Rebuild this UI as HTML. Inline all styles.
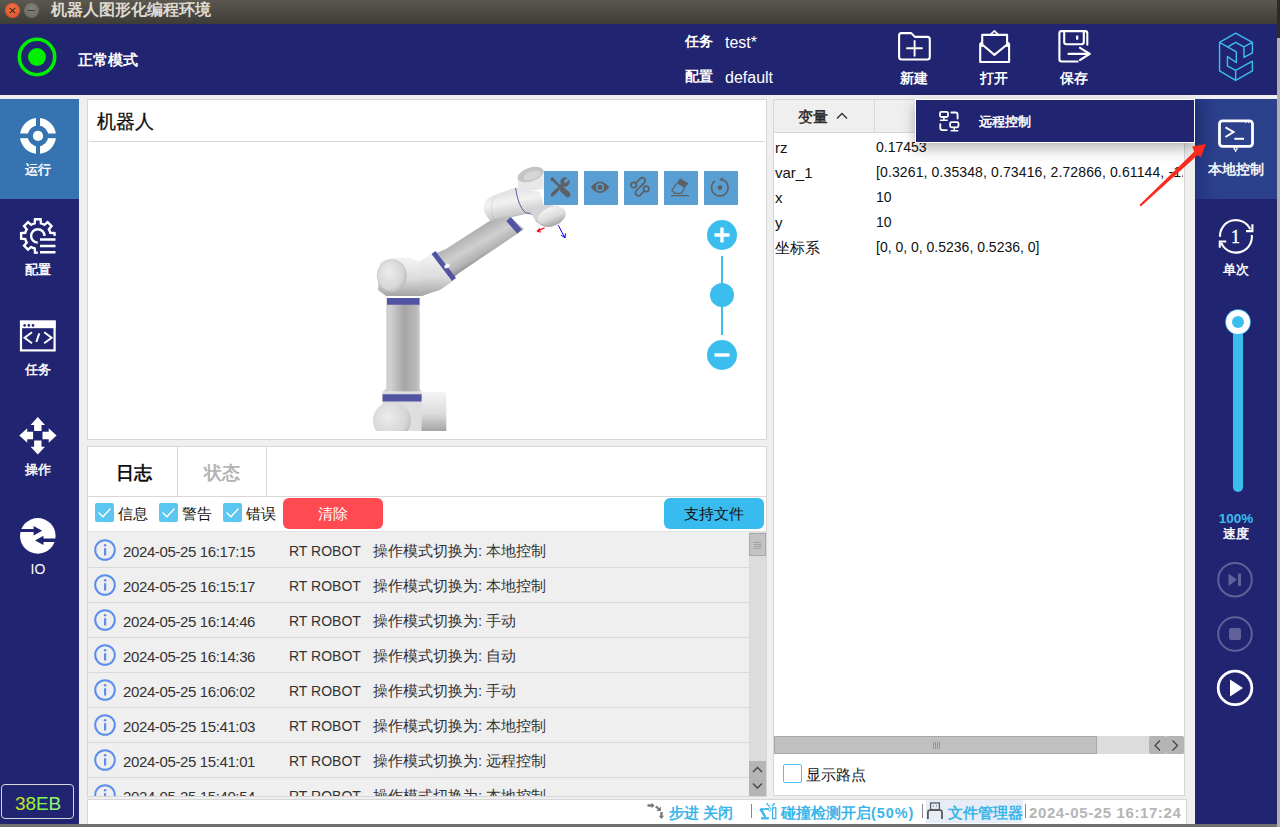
<!DOCTYPE html>
<html><head><meta charset="utf-8">
<style>
*{box-sizing:border-box;margin:0;padding:0}
html,body{width:1280px;height:827px;overflow:hidden;background:#efefef;font-family:"Liberation Sans",sans-serif;position:relative}
.a{position:absolute}
.nw{white-space:nowrap}
#title{left:0;top:0;width:1277px;height:24px;background:linear-gradient(#5a5850,#3d3c37)}
#hdr{left:0;top:24px;width:1277px;height:71px;background:#212470}
#lsb{left:0;top:99px;width:79px;height:725px;background:#212470}
#rsb{left:1195px;top:99px;width:82px;height:725px;background:#212470}
#rstrip{left:1277px;top:38px;width:3px;height:789px;background:#b0b0b0}
#rstrip2{left:1277px;top:0;width:3px;height:38px;background:#2c2b28}
#bstrip{left:0;top:824px;width:1277px;height:3px;background:#707070}
.panel{background:#fff;border:1px solid #d6d6d6}
.wt{color:#fff}
.lbl{color:#fff;font-size:13px;font-weight:normal;-webkit-text-stroke:0.45px #fff;text-align:center;width:76px;left:0}
.hl{color:#fff;font-size:13px;font-weight:bold}
.tb{width:34px;height:34px;background:#5a9fd4;top:171px}
.tb svg{position:absolute;left:0;top:0}
.row{left:88px;width:661px;height:35px;background:#efefef;border-bottom:1px solid #d9d9d9}
.row .ic{position:absolute;left:6px;top:6px}
.row .d{position:absolute;left:35px;top:10px;font-size:15px;letter-spacing:-0.38px;color:#333}
.row .r{position:absolute;left:201px;top:10px;font-size:14px;color:#333}
.row .m{position:absolute;left:285px;top:9px;font-size:15px;color:#333}
.vr{left:775px;font-size:15px;color:#111}
.vv{left:876px;font-size:14px;color:#111}
.cb{width:19px;height:19px;background:#5bc6f0;border-radius:2px;top:503px}
.st{color:#3ab5ea;font-size:14.5px;font-weight:bold;top:803.5px}
</style></head><body>
<div id="title" class="a"></div>
<div id="rstrip2" class="a"></div>
<div id="rstrip" class="a"></div>
<div id="bstrip" class="a"></div>
<!-- title bar buttons -->
<div class="a" style="left:5px;top:3px;width:15px;height:15px;border-radius:50%;background:radial-gradient(circle at 50% 40%,#f47a4a,#d9461e)"></div>
<svg class="a" style="left:5px;top:3px" width="15" height="15"><path d="M4.8 4.8L10.2 10.2M10.2 4.8L4.8 10.2" stroke="#3a2418" stroke-width="1.1"/></svg>
<div class="a" style="left:24px;top:3px;width:15px;height:15px;border-radius:50%;background:radial-gradient(circle at 50% 40%,#848279,#66645d)"></div>
<div class="a" style="left:28px;top:10px;width:7px;height:1px;background:#3b3a36"></div>
<div class="a nw" style="left:51px;top:0px;font-size:16px;font-weight:bold;color:#dedad0;line-height:20px">机器人图形化编程环境</div>

<div id="hdr" class="a"></div>
<div id="lsb" class="a"></div>
<div id="rsb" class="a"></div>

<!-- header -->
<svg class="a" style="left:17px;top:37px" width="40" height="40"><circle cx="20" cy="20" r="17.7" fill="none" stroke="#00ee00" stroke-width="3.6"/><circle cx="20" cy="20" r="9" fill="#00ee00"/></svg>
<div class="a nw hl" style="left:78px;top:51px;font-size:14.5px">正常模式</div>
<div class="a nw hl" style="left:685px;top:33px;font-size:14px">任务</div>
<div class="a nw wt" style="left:725px;top:34px;font-size:16px">test*</div>
<div class="a nw hl" style="left:685px;top:68px;font-size:14px">配置</div>
<div class="a nw wt" style="left:725px;top:69px;font-size:16px">default</div>
<svg class="a" style="left:890px;top:24px" width="210" height="70" viewBox="890 24 210 70" fill="none" stroke="#fff" stroke-width="2.1" stroke-linejoin="round" stroke-linecap="round">
 <path d="M901.6 33.1H911.3L914.9 36.9H927.3Q929.8 36.9 929.8 39.4V57Q929.8 59.5 927.3 59.5H901.6Q899.1 59.5 899.1 57V35.6Q899.1 33.1 901.6 33.1Z"/>
 <path d="M914.6 41V55.7M907 48.3H922" stroke-width="1.9"/>
 <path d="M980.2 44V62H1009.1V44L1007.1 42M980.2 44L982.2 42M982.2 44.5L994.4 54.9L1007.1 44.5M982.2 46V34.9H1007.1V46" />
 <path d="M990.5 34.5L994.4 30.8L998.3 34.5" stroke-width="1.6"/>
 <path d="M1077.7 61.5H1061.6Q1059.4 61.5 1059.4 59.3V33.3Q1059.4 31.1 1061.6 31.1H1085.1Q1087.3 31.1 1087.3 33.3V44.8M1064.2 31.5V42.1Q1064.2 44.3 1066.4 44.3H1081.6Q1083.8 44.3 1083.8 42.1V31.5"/>
 <path d="M1077.2 35.6V39.7" stroke-width="2.2" stroke-linecap="butt"/>
 <path d="M1068.5 53.9H1089.5M1080 47.8L1089.8 53.9L1080 60"/>
</svg>
<div class="a nw hl" style="left:900px;top:70px;font-size:13.5px">新建</div>
<div class="a nw hl" style="left:980px;top:70px;font-size:13.5px">打开</div>
<div class="a nw hl" style="left:1060px;top:70px;font-size:13.5px">保存</div>
<svg class="a" style="left:1205px;top:24px" width="70" height="70" viewBox="0 0 827 827" fill="none" stroke="#3bbdee" stroke-width="17" stroke-linejoin="round">
 <path d="M172 218L362 108L560 218L560 340L460 395L460 270L560 218"/>
 <path d="M172 218L370 330L370 455L265 385L265 495L362 548L560 440L560 555L362 665L172 555Z"/>
 <path d="M270 270L362 218L460 270M362 548V665"/>
</svg>

<!-- left sidebar -->
<div class="a" style="left:0;top:99px;width:79px;height:100px;background:#3574b1"></div>
<svg class="a" style="left:0;top:99px" width="79" height="500">
 <g transform="translate(38,36.9)">
  <path fill="#fff" fill-rule="evenodd" d="M-18 0A18 18 0 1 0 18 0A18 18 0 1 0 -18 0ZM-10.3 0A10.3 10.3 0 1 1 10.3 0A10.3 10.3 0 1 1 -10.3 0Z"/>
  <rect x="-2" y="-19" width="4" height="38" fill="#3574b1"/>
  <rect x="-19" y="-2.4" width="38" height="4.7" fill="#3574b1"/>
  <circle r="5.1" fill="#fff"/>
 </g>
</svg>
<div class="a nw lbl" style="top:161px">运行</div>
<svg class="a" style="left:0;top:199px" width="79" height="100" viewBox="0 199 79 100" fill="none" stroke="#fff" stroke-width="2.4">
 <path d="M54.70 235.90L54.47 233.11L50.32 232.78A12.9 12.9 0 0 0 48.86 229.26L51.56 226.09L47.61 222.14L44.44 224.84A12.9 12.9 0 0 0 40.92 223.38L40.59 219.23L35.01 219.23L34.68 223.38A12.9 12.9 0 0 0 31.16 224.84L27.99 222.14L24.04 226.09L26.74 229.26A12.9 12.9 0 0 0 25.28 232.78L21.13 233.11L21.13 238.69L25.28 239.02A12.9 12.9 0 0 0 26.74 242.54L24.04 245.71L27.99 249.66L31.16 246.96A12.9 12.9 0 0 0 34.68 248.42L35.01 252.57L37.80 252.80" stroke-linejoin="miter"/>
 <path d="M37.8 242.6A6.7 6.7 0 1 1 44.5 235.9"/>
 <path d="M40 239.5H55.5M40 245.9H55.5M40 252.3H55.5" stroke-width="2.5"/>
</svg>
<div class="a nw lbl" style="top:261px">配置</div>
<svg class="a" style="left:0;top:300px" width="79" height="100">
 <rect x="21" y="21.6" width="33.6" height="28.8" fill="none" stroke="#fff" stroke-width="2.2"/>
 <rect x="20" y="20.6" width="35.6" height="7.6" fill="#fff"/>
 <circle cx="24.6" cy="25.4" r="1.3" fill="#212470"/><circle cx="28.8" cy="25.4" r="1.3" fill="#212470"/><circle cx="33" cy="25.4" r="1.3" fill="#212470"/>
 <path d="M32 32.2L24.6 37.7L32 43.2M44.2 32.2L51.6 37.7L44.2 43.2M39.3 33.4L36.3 42" fill="none" stroke="#fff" stroke-width="2"/>
</svg>
<div class="a nw lbl" style="top:361px">任务</div>
<svg class="a" style="left:0;top:399px" width="79" height="100">
 <path fill="#fff" d="M37.8 18.1L45 26H41.5V32.1H34.1V26H30.6Z M37.8 55.6L45 47.7H41.5V41.6H34.1V47.7H30.6Z M19.3 36.5L27.2 29.3V32.8H33.1V40.2H27.2V43.7Z M56.6 36.5L48.7 29.3V32.8H42.5V40.2H48.7V43.7Z"/>
</svg>
<div class="a nw lbl" style="top:461px">操作</div>
<svg class="a" style="left:0;top:499px" width="79" height="100">
 <circle cx="37.8" cy="36.9" r="17.8" fill="#fff"/>
 <path fill="#212470" d="M19 29.9H33.6V27L42.2 31.7L33.6 36.4V33H19Z M57 39.5H43.5V36.8L35 41.4L43.5 46.1V43H57Z"/>
</svg>
<div class="a nw lbl" style="top:561px;font-weight:normal;font-size:14px;-webkit-text-stroke:0">IO</div>
<div class="a" style="left:1px;top:784px;width:73px;height:35px;border:1.5px solid #d8d8d8;border-radius:4px"></div>
<div class="a nw" style="left:15px;top:793px;font-size:19px;letter-spacing:-0.1px"><span style="color:#c9e31c">3</span><span style="color:#9cf32a">8</span><span style="color:#7ef552">E</span><span style="color:#93f473">B</span></div>

<!-- robot panel -->
<div class="a panel" style="left:87px;top:99px;width:680px;height:341px"></div>
<div class="a nw" style="left:97px;top:109px;font-size:18.5px;color:#111;-webkit-text-stroke:0.3px #111">机器人</div>
<div class="a" style="left:89px;top:141px;width:676px;height:1px;background:#d8d8d8"></div>

<!-- robot -->
<svg class="a" style="left:360px;top:155px" width="215" height="276" viewBox="360 155 215 276">
 <defs>
  <linearGradient id="gv" x1="382" x2="422" y1="0" y2="0" gradientUnits="userSpaceOnUse"><stop offset="0" stop-color="#c4c4c4"/><stop offset="0.2" stop-color="#d2d2d2"/><stop offset="0.55" stop-color="#a6a6a6"/><stop offset="0.85" stop-color="#b8b8b8"/><stop offset="1" stop-color="#d8d8d8"/></linearGradient>
  <linearGradient id="gf" x1="451" y1="244" x2="466" y2="270" gradientUnits="userSpaceOnUse"><stop offset="0" stop-color="#b0b0b0"/><stop offset="0.45" stop-color="#cfcfcf"/><stop offset="0.8" stop-color="#b4b4b4"/><stop offset="1" stop-color="#8c8c8c"/></linearGradient>
  <linearGradient id="gj" x1="0" x2="0" y1="0" y2="1"><stop offset="0" stop-color="#f4f4f4"/><stop offset="0.55" stop-color="#dcdcdc"/><stop offset="1" stop-color="#a4a4a4"/></linearGradient>
  <linearGradient id="gw" x1="490" y1="192" x2="496" y2="224" gradientUnits="userSpaceOnUse"><stop offset="0" stop-color="#dedede"/><stop offset="0.4" stop-color="#f2f2f2"/><stop offset="0.8" stop-color="#cdcdcd"/><stop offset="1" stop-color="#9a9a9a"/></linearGradient>
  <radialGradient id="gc" cx="0.4" cy="0.4" r="0.7"><stop offset="0" stop-color="#ececec"/><stop offset="0.7" stop-color="#d6d6d6"/><stop offset="1" stop-color="#b4b4b4"/></radialGradient>
 </defs>
 <!-- base -->
 <path d="M421 392.3H443Q446.3 392.3 446.3 396V431H421Z" fill="url(#gj)"/>
 <path d="M382.5 391.6H421.6V431H382.5Z" fill="#dedede"/>
 <circle cx="391.9" cy="420.6" r="19" fill="url(#gc)"/>
 <path d="M382.5 394.2H421.6V401.4H382.5Z" fill="#5054a2"/>
 <!-- lower arm -->
 <path d="M386.3 298H419.8V388.7L421.6 391.6H382.8L386.3 388.7Z" fill="url(#gv)"/>
 <path d="M387 298H419.5V304.8H387Z" fill="#5054a2"/>
 <!-- forearm tube -->
 <path d="M420 262L432 255L445.9 249L488.3 221.8L505 212L524 229L522.1 230.5L459 272.9L447 283L436 290L422 296Z" fill="url(#gf)"/>
 <path d="M418 263L431 254L438 254L446 266L453 281L440 290L421 296Z" fill="url(#gj)"/>
 <path d="M433.5 252.5L454 279.5" stroke="#5054a2" stroke-width="5"/>
 <path d="M508.5 219L519.5 231.5" stroke="#5054a2" stroke-width="6"/>
 <ellipse cx="447" cy="266" rx="3" ry="2" fill="#f8f8f8" transform="rotate(-30 447 266)"/>
 <!-- shoulder joint -->
 <path d="M380 262Q390 256 410 258L420 262L421 296H386L378 290Z" fill="url(#gj)"/>
 <ellipse cx="391.8" cy="275.7" rx="14.5" ry="16.2" fill="url(#gc)" stroke="#b8b8b8" stroke-width="0.6"/>
 <!-- wrist1 -->
 <path d="M492.4 195.8L515.6 187.6L540 192L544 206L533 212.2L491.4 221.9Q483.7 214 483.7 208Q484 199 492.4 195.8Z" fill="url(#gw)"/>
 <path d="M515.6 188Q518 206 525.3 212.7Q534 216 542.7 214.2L558.2 206.4" fill="none" stroke="#4a4f98" stroke-width="0.9"/>
 <path d="M495 197Q488 208 496 221" fill="none" stroke="#888" stroke-width="0.5" stroke-dasharray="1 1.5"/>
 <!-- wrist2 top cap -->
 <path d="M517.6 179.3L543.7 169.7V189L518.5 192Z" fill="#e8e8e8"/>
 <ellipse cx="530.6" cy="174.5" rx="13.5" ry="6.8" transform="rotate(-18 530.6 174.5)" fill="#c4c4c4"/>
 <ellipse cx="532" cy="175.5" rx="9" ry="4" transform="rotate(-18 532 175.5)" fill="#d6d6d6"/>
 <!-- flange -->
 <path d="M530 211L546 204L560 207L552 226L536 222Z" fill="#d4d4d4"/>
 <ellipse cx="551.9" cy="216.5" rx="14.5" ry="9.5" transform="rotate(-22 551.9 216.5)" fill="url(#gj)"/>
 <path d="M536 221Q545 228 552 226" fill="none" stroke="#999" stroke-width="0.6"/>
 <path d="M544.6 227.7L537 231.5M537 231.5L540 228.5M537 231.5L541 232" stroke="#f00" stroke-width="1.2" fill="none"/>
 <path d="M558.2 225.2L565 237.9M565 237.9L561 235M565 237.9L565.5 233.5" stroke="#00f" stroke-width="1" fill="none"/>
</svg>
<div class="a tb" style="left:544px"><svg width="34" height="34"><g stroke="#5d6166" stroke-linecap="round"><path d="M8.4 8.2L16.8 16.6" stroke-width="2.6"/><path d="M19 19L23.6 23.6" stroke-width="5.6"/><path d="M8.3 23.8L13.6 18.5" stroke-width="3.4"/><path d="M15.6 16.8L19.6 12.8" stroke-width="3.4"/></g><circle cx="8.4" cy="8.2" r="1.9" fill="#5d6166"/><circle cx="21" cy="11" r="4.7" fill="#5d6166"/><path d="M21.4 10.6L25.6 6.4" stroke="#5a9fd4" stroke-width="2.8" stroke-linecap="round"/></svg></div>
<div class="a tb" style="left:584px"><svg width="34" height="34"><path d="M6.8 16.2Q16 4.6 25.3 16.2Q16 27.8 6.8 16.2Z" fill="#5d6166"/><circle cx="16" cy="16.2" r="3.25" fill="none" stroke="#5a9fd4" stroke-width="1.5"/></svg></div>
<div class="a tb" style="left:624px"><svg width="34" height="34" fill="none" stroke="#5d6166" stroke-width="1.7"><circle cx="9.7" cy="14" r="2.7"/><circle cx="22.2" cy="17.9" r="2.7"/><path d="M11.6 12.1L16.2 7.6A2.9 2.9 0 0 1 20.3 11.7L12 20A3 3 0 0 0 16.2 24.2L20.3 19.9"/></svg></div>
<div class="a tb" style="left:664px"><svg width="34" height="34"><path d="M16 7.2L24.5 12.3L20.6 16.9L12.8 12.3Z" fill="#5d6166"/><path d="M12.8 12.3L7.8 19.5L10.8 22.3H17.4L20.6 16.9" fill="none" stroke="#5d6166" stroke-width="1.3"/><path d="M7 24.6H25.1" stroke="#5d6166" stroke-width="1.3"/></svg></div>
<div class="a tb" style="left:704px"><svg width="34" height="34"><path d="M10.9 9.9A8.3 8.3 0 1 0 18 8.6" fill="none" stroke="#5d6166" stroke-width="1.6"/><path d="M15.3 8.4L18.9 5.9L18.4 10.7Z" fill="#5d6166"/><circle cx="16" cy="16.7" r="2.4" fill="#5d6166"/></svg></div>
<svg class="a" style="left:700px;top:215px" width="44" height="160">
 <circle cx="22" cy="20" r="15" fill="#3bbdee"/><path d="M14.5 20H29.5M22 12.5V27.5" stroke="#fff" stroke-width="3.4"/>
 <rect x="21" y="41" width="2" height="79" fill="#3bbdee"/>
 <circle cx="22" cy="80" r="12" fill="#3bbdee"/>
 <circle cx="22" cy="140" r="15" fill="#3bbdee"/><path d="M14.5 140H29.5" stroke="#fff" stroke-width="3.4"/>
</svg>
<!-- log panel -->
<div class="a panel" style="left:87px;top:446px;width:680px;height:351px"></div>
<div class="a" style="left:88px;top:496px;width:678px;height:1px;background:#d8d8d8"></div>
<div class="a" style="left:177px;top:447px;width:1px;height:49px;background:#d8d8d8"></div>
<div class="a" style="left:266px;top:447px;width:1px;height:49px;background:#d8d8d8"></div>
<div class="a nw" style="left:116px;top:461px;font-size:18px;font-weight:bold;color:#111">日志</div>
<div class="a nw" style="left:204px;top:461px;font-size:18px;font-weight:bold;color:#b4b4b4">状态</div>
<div class="a" style="left:88px;top:531px;width:678px;height:1px;background:#e2e2e2"></div>
<div class="a cb" style="left:95px"><svg width="19" height="19"><path d="M3.5 9.5L8 13.8L15.5 5.5" fill="none" stroke="#fff" stroke-width="1.3"/></svg></div>
<div class="a nw" style="left:118px;top:505px;font-size:15px;color:#111">信息</div>
<div class="a cb" style="left:159px"><svg width="19" height="19"><path d="M3.5 9.5L8 13.8L15.5 5.5" fill="none" stroke="#fff" stroke-width="1.3"/></svg></div>
<div class="a nw" style="left:182px;top:505px;font-size:15px;color:#111">警告</div>
<div class="a cb" style="left:223px"><svg width="19" height="19"><path d="M3.5 9.5L8 13.8L15.5 5.5" fill="none" stroke="#fff" stroke-width="1.3"/></svg></div>
<div class="a nw" style="left:246px;top:505px;font-size:15px;color:#111">错误</div>
<div class="a" style="left:283px;top:498px;width:100px;height:31px;border-radius:6px;background:#fe4a50"></div>
<div class="a nw" style="left:318px;top:505px;font-size:15px;color:#fff">清除</div>
<div class="a" style="left:664px;top:498px;width:100px;height:31px;border-radius:6px;background:#38bbee"></div>
<div class="a nw" style="left:684px;top:505px;font-size:15px;color:#111">支持文件</div>
<div class="a" style="left:88px;top:532px;width:678px;height:264px;overflow:hidden;background:#efefef" id="loglist"><div class="a row" style="left:0;top:1px"><svg class="ic" width="22" height="22"><circle cx="11" cy="11" r="9.8" fill="none" stroke="#5b8fef" stroke-width="2"/><rect x="10" y="9.2" width="2.2" height="7.3" fill="#5b8fef"/><circle cx="11.1" cy="6.3" r="1.3" fill="#5b8fef"/></svg><span class="d nw">2024-05-25 16:17:15</span><span class="r nw">RT ROBOT</span><span class="m nw">操作模式切换为: 本地控制</span></div><div class="a row" style="left:0;top:36px"><svg class="ic" width="22" height="22"><circle cx="11" cy="11" r="9.8" fill="none" stroke="#5b8fef" stroke-width="2"/><rect x="10" y="9.2" width="2.2" height="7.3" fill="#5b8fef"/><circle cx="11.1" cy="6.3" r="1.3" fill="#5b8fef"/></svg><span class="d nw">2024-05-25 16:15:17</span><span class="r nw">RT ROBOT</span><span class="m nw">操作模式切换为: 本地控制</span></div><div class="a row" style="left:0;top:71px"><svg class="ic" width="22" height="22"><circle cx="11" cy="11" r="9.8" fill="none" stroke="#5b8fef" stroke-width="2"/><rect x="10" y="9.2" width="2.2" height="7.3" fill="#5b8fef"/><circle cx="11.1" cy="6.3" r="1.3" fill="#5b8fef"/></svg><span class="d nw">2024-05-25 16:14:46</span><span class="r nw">RT ROBOT</span><span class="m nw">操作模式切换为: 手动</span></div><div class="a row" style="left:0;top:106px"><svg class="ic" width="22" height="22"><circle cx="11" cy="11" r="9.8" fill="none" stroke="#5b8fef" stroke-width="2"/><rect x="10" y="9.2" width="2.2" height="7.3" fill="#5b8fef"/><circle cx="11.1" cy="6.3" r="1.3" fill="#5b8fef"/></svg><span class="d nw">2024-05-25 16:14:36</span><span class="r nw">RT ROBOT</span><span class="m nw">操作模式切换为: 自动</span></div><div class="a row" style="left:0;top:141px"><svg class="ic" width="22" height="22"><circle cx="11" cy="11" r="9.8" fill="none" stroke="#5b8fef" stroke-width="2"/><rect x="10" y="9.2" width="2.2" height="7.3" fill="#5b8fef"/><circle cx="11.1" cy="6.3" r="1.3" fill="#5b8fef"/></svg><span class="d nw">2024-05-25 16:06:02</span><span class="r nw">RT ROBOT</span><span class="m nw">操作模式切换为: 手动</span></div><div class="a row" style="left:0;top:176px"><svg class="ic" width="22" height="22"><circle cx="11" cy="11" r="9.8" fill="none" stroke="#5b8fef" stroke-width="2"/><rect x="10" y="9.2" width="2.2" height="7.3" fill="#5b8fef"/><circle cx="11.1" cy="6.3" r="1.3" fill="#5b8fef"/></svg><span class="d nw">2024-05-25 15:41:03</span><span class="r nw">RT ROBOT</span><span class="m nw">操作模式切换为: 本地控制</span></div><div class="a row" style="left:0;top:211px"><svg class="ic" width="22" height="22"><circle cx="11" cy="11" r="9.8" fill="none" stroke="#5b8fef" stroke-width="2"/><rect x="10" y="9.2" width="2.2" height="7.3" fill="#5b8fef"/><circle cx="11.1" cy="6.3" r="1.3" fill="#5b8fef"/></svg><span class="d nw">2024-05-25 15:41:01</span><span class="r nw">RT ROBOT</span><span class="m nw">操作模式切换为: 远程控制</span></div><div class="a row" style="left:0;top:246px"><svg class="ic" width="22" height="22"><circle cx="11" cy="11" r="9.8" fill="none" stroke="#5b8fef" stroke-width="2"/><rect x="10" y="9.2" width="2.2" height="7.3" fill="#5b8fef"/><circle cx="11.1" cy="6.3" r="1.3" fill="#5b8fef"/></svg><span class="d nw">2024-05-25 15:40:54</span><span class="r nw">RT ROBOT</span><span class="m nw">操作模式切换为: 本地控制</span></div><div class="a" style="left:661px;top:0;width:17px;height:264px;background:#dcdcdc"></div><div class="a" style="left:661px;top:1px;width:17px;height:23px;background:#c3c3c3;border:1px solid #a9a9a9"></div><svg class="a" style="left:661px;top:1px" width="17" height="23"><path d="M4.5 9.5H12.5M4.5 11.5H12.5M4.5 13.5H12.5M4.5 15.5H12.5" stroke="#999" stroke-width="0.8"/></svg><div class="a" style="left:661px;top:229px;width:17px;height:35px;background:#b5b5b5"></div><svg class="a" style="left:661px;top:229px" width="17" height="35" fill="none" stroke="#444" stroke-width="1.3"><path d="M4 11L8.5 6.5L13 11M4 22.5L8.5 27L13 22.5"/></svg></div>

<!-- variables panel -->
<div class="a panel" style="left:773px;top:99px;width:412px;height:697px"></div>
<div class="a" style="left:774px;top:100px;width:410px;height:33px;background:#efefef;border-bottom:1px solid #d8d8d8"></div>
<div class="a" style="left:874px;top:100px;width:1px;height:33px;background:#d8d8d8"></div>
<div class="a nw" style="left:798px;top:108px;font-size:15px;color:#222;-webkit-text-stroke:0.4px #222">变量</div>
<svg class="a" style="left:835px;top:111px" width="14" height="10"><path d="M2 7.5L7 2.5L12 7.5" fill="none" stroke="#333" stroke-width="1.4"/></svg>
<div class="a nw vr" style="top:139px">rz</div><div class="a nw vv" style="top:139px">0.17453</div>
<div class="a nw vr" style="top:164px">var_1</div><div class="a nw vv" style="top:164px;width:307px;overflow:hidden;letter-spacing:0.12px">[0.3261, 0.35348, 0.73416, 2.72866, 0.61144, -1.</div>
<div class="a nw vr" style="top:189px">x</div><div class="a nw vv" style="top:189px">10</div>
<div class="a nw vr" style="top:214px">y</div><div class="a nw vv" style="top:214px">10</div>
<div class="a nw vr" style="top:239px">坐标系</div><div class="a nw vv" style="top:239px">[0, 0, 0, 0.5236, 0.5236, 0]</div>
<div class="a" style="left:774px;top:736px;width:410px;height:18px;background:#dcdcdc"></div>
<div class="a" style="left:774px;top:736px;width:323px;height:18px;background:#c0c0c0;border:1px solid #a8a8a8"></div>
<svg class="a" style="left:930px;top:736.5px" width="12" height="17"><path d="M3.5 5V12M5.5 5V12M7.5 5V12M9.5 5V12" stroke="#888" stroke-width="0.8"/></svg>
<div class="a" style="left:1149px;top:736px;width:17px;height:18px;background:#b4b4b4;border-radius:2px"></div>
<div class="a" style="left:1166px;top:736px;width:18px;height:18px;background:#b4b4b4;border-radius:2px"></div>
<svg class="a" style="left:1149px;top:736.5px" width="35" height="17" fill="none" stroke="#444" stroke-width="1.3"><path d="M11 3.5L6 8.5L11 13.5M23.5 3.5L28.5 8.5L23.5 13.5"/></svg>
<div class="a" style="left:783px;top:764px;width:19px;height:19px;border:1.3px solid #4cc3f2;border-radius:2px;background:#fff"></div>
<div class="a nw" style="left:806px;top:766px;font-size:15px;color:#111">显示路点</div>
<!-- status bar -->
<div class="a" style="left:87px;top:799px;width:1100px;height:25px;background:#fff;border:1px solid #d6d6d6;border-bottom:none"></div>
<svg class="a" style="left:640px;top:798px" width="30" height="26" viewBox="640 798 30 26" fill="#777"><path d="M647.5 804.3H651.5V802.8L654.6 805.5L651.5 808.2V806.7H647.5Z"/><path d="M655 807.3L656.7 805.6L659.3 808.2L660.9 806.6V811.1H656.4L658 809.5Z"/><path d="M660.3 812H662.6V815.8H664.1L661.45 819.1L658.8 815.8H660.3Z"/></svg>
<div class="a nw st" style="left:669px">步进 关闭</div>
<div class="a" style="left:751px;top:804px;width:1px;height:14px;background:#888"></div>
<svg class="a" style="left:752px;top:798px" width="30" height="26" viewBox="752 798 30 26"><path d="M761.1 817.2H768.8V819.4H761.1Z" fill="#3ab5ea"/><path d="M761.5 810.2L765.2 817" stroke="#3ab5ea" stroke-width="2.4"/><path d="M761 809.5Q765 808.6 768.6 809" stroke="#3ab5ea" stroke-width="1.8" fill="none"/><circle cx="761.1" cy="809.8" r="1.6" fill="#3ab5ea"/><path d="M769.6 807.2L771.2 809.3L769.6 811.4L768 809.3Z" fill="none" stroke="#3ab5ea" stroke-width="1"/><rect x="772.6" y="807.8" width="3.2" height="10.8" fill="none" stroke="#3ab5ea" stroke-width="1.3"/><path d="M767 803.8L769.5 806.5M774.2 803.8L771.8 806.3" stroke="#3ab5ea" stroke-width="1.2"/><circle cx="767" cy="803.8" r="0.9" fill="#3ab5ea"/><circle cx="774.2" cy="803.8" r="0.9" fill="#3ab5ea"/></svg>
<div class="a nw st" style="left:781px">碰撞检测开启<span style="letter-spacing:0.9px">(50%)</span></div>
<div class="a" style="left:922px;top:804px;width:1px;height:14px;background:#888"></div>
<div class="a" style="left:926px;top:800px;width:97px;height:23px;background:#e6edf6"></div>
<svg class="a" style="left:918px;top:798px" width="30" height="26" viewBox="918 798 30 26" fill="none" stroke="#5a5a5a"><rect x="930.6" y="803" width="8.8" height="6.6" stroke-width="1.3"/><path d="M933.4 805.5V806.5M936.6 805.5V806.5" stroke-width="0.9"/><path d="M927.9 819.1V812.2Q927.9 810.1 930 810.1H939.9Q942 810.1 942 812.2V819.1" stroke-width="1.8"/></svg>
<div class="a nw st" style="left:948px">文件管理器</div>
<div class="a" style="left:1025px;top:804px;width:1px;height:14px;background:#888"></div>
<div class="a nw" style="left:1029px;top:803.5px;font-size:15px;font-weight:bold;color:#b5b5b5;letter-spacing:0.6px">2024-05-25 16:17:24</div>
<!-- right sidebar -->
<div class="a" style="left:1195px;top:99px;width:82px;height:100px;background:linear-gradient(90deg,#243580,#2c418c 30%,#2c418c)"></div>
<svg class="a" style="left:1195px;top:99px" width="82" height="600" fill="none" stroke="#fff">
 <rect x="24.5" y="21.8" width="33" height="25.5" rx="3" stroke-width="2.8"/>
 <path d="M30.5 28.4L38.5 33L30.5 38" stroke-width="2"/><path d="M39.4 39.8H49" stroke-width="2"/>
 <circle cx="50.8" cy="23.6" r="0.7" fill="#fff" stroke="none"/><circle cx="53.6" cy="23.6" r="0.7" fill="#fff" stroke="none"/>
 <circle cx="40.6" cy="49.6" r="1.5" stroke-width="1.3"/><path d="M40.6 51.1V53" stroke-width="1.3"/>
</svg>
<svg class="a" style="left:1212px;top:212px" width="50" height="50" viewBox="1212 212 50 50" fill="none" stroke="#fff" stroke-width="2.1">
 <path d="M1220 236.8A15.9 15.9 0 0 1 1250.3 229.3"/>
 <path d="M1252.4 224.3V231.1H1246"/>
 <path d="M1251.8 235A15.9 15.9 0 0 1 1221.3 242.8"/>
 <path d="M1226.2 241.5H1219.8V247.8"/>
</svg>
<div class="a nw" style="left:1231px;top:226px;font-family:'Liberation Serif',serif;font-size:18px;color:#fff;line-height:22px;-webkit-text-stroke:0.4px #fff">1</div>
<div class="a nw lbl" style="left:1195px;width:82px;top:161px;font-size:13.5px">本地控制</div>
<div class="a nw lbl" style="left:1195px;width:82px;top:261px">单次</div>
<div class="a" style="left:1233px;top:322px;width:10px;height:170px;border-radius:0 0 5px 5px;background:#3bbdee"></div>
<div class="a" style="left:1226px;top:310px;width:24px;height:24px;border-radius:50%;background:#fff;box-shadow:0 0 0 0.8px #3bbdee"></div>
<div class="a" style="left:1232px;top:316px;width:12px;height:12px;border-radius:50%;background:#3bbdee"></div>
<div class="a nw" style="left:1195px;width:82px;text-align:center;top:511px;font-size:13.5px;font-weight:bold;color:#3bbdee">100%</div>
<div class="a nw lbl" style="left:1195px;width:82px;top:525px">速度</div>
<svg class="a" style="left:1195px;top:540px" width="82" height="180">
 <circle cx="40" cy="39.7" r="16.8" fill="none" stroke="#5f6198" stroke-width="2"/>
 <path d="M33.5 33.5L42 39.7L33.5 46Z M43 33.5H46V46H43Z" fill="#5f6198"/>
 <circle cx="40" cy="94" r="16.8" fill="none" stroke="#5f6198" stroke-width="2"/>
 <rect x="34" y="88" width="12" height="12" rx="2" fill="#5f6198"/>
 <circle cx="40" cy="147.9" r="16.8" fill="none" stroke="#fff" stroke-width="2.8"/>
 <path d="M35 139.5L48 148L35 156.5Z" fill="#fff"/>
</svg>
<!-- popup -->
<div class="a" style="left:915px;top:99px;width:280px;height:44px;box-shadow:0 6px 14px rgba(0,0,0,0.28)"></div>
<div class="a" style="left:915px;top:99px;width:280px;height:44px;background:#212470;border:1px solid #fff"></div>
<svg class="a" style="left:934px;top:106px" width="30" height="30" viewBox="934 106 30 30" fill="none" stroke="#fff" stroke-width="1.8" stroke-linecap="round">
 <rect x="940" y="111.8" width="8" height="5.2" rx="1.5"/><path d="M943.9 117.5V119.8M940.5 120.2H947.2" stroke-width="1.5"/>
 <path d="M951.3 112.5H955.6Q957.6 112.5 957.6 114.5V118.6"/>
 <path d="M940.3 124.2V128.1Q940.3 130.1 942.3 130.1H946.8"/>
 <rect x="950.1" y="122.1" width="8.4" height="5.2" rx="1.5"/><path d="M954.3 127.6V130.2M951.2 130.7H957.7" stroke-width="1.5"/>
</svg>
<div class="a nw" style="left:979px;top:113px;font-size:13px;color:#fff;-webkit-text-stroke:0.5px #fff">远程控制</div>
<!-- red arrow -->
<svg class="a" style="left:1130px;top:135px" width="85" height="80" viewBox="1130 135 85 80"><path d="M1139.6 204.8L1194.1 151.7L1192.2 146.4L1206 143.9L1200.9 156.9L1197.5 155.3L1141 206.2Q1140 206.5 1139.6 204.8Z" fill="#fb2a1d"/></svg>
</body></html>
